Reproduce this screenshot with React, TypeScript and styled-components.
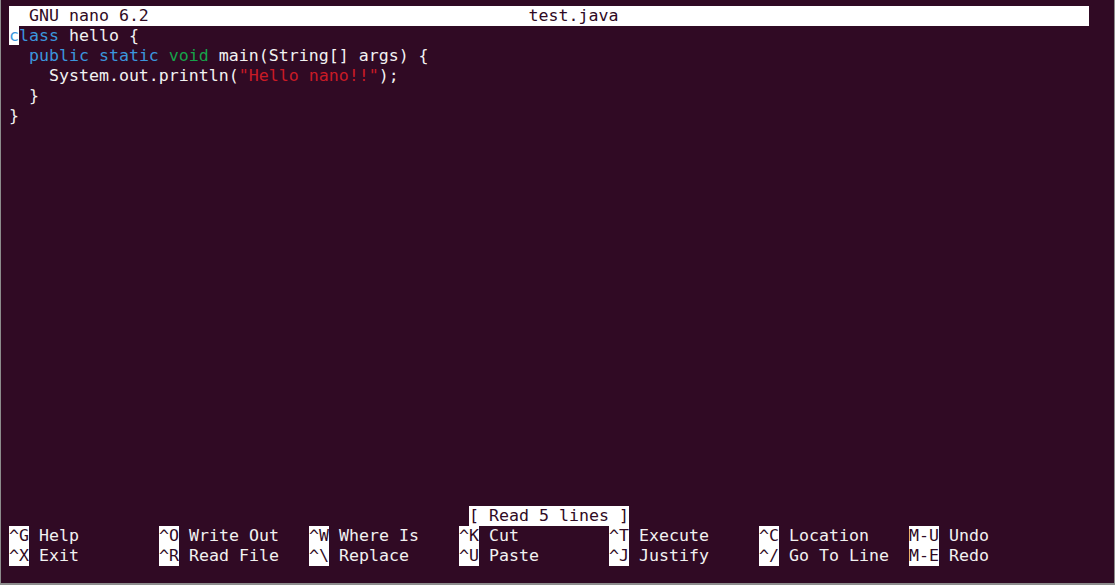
import React from 'react';
import styled, { createGlobalStyle } from 'styled-components';

const BG = '#300a24';
const FG = '#f2f2f2';

const GlobalStyle = createGlobalStyle`
  html, body {
    margin: 0;
    padding: 0;
    background: ${BG};
  }
`;

const Terminal = styled.div`
  box-sizing: border-box;
  width: 1115px;
  height: 585px;
  background: ${BG};
  border-left: 1px solid #8c8c8c;
  border-right: 1px solid #8c8c8c;
  border-bottom: 2px solid #8c8c8c;
  padding: 6px 0 0 8px;
  display: flex;
  flex-direction: column;
  font-family: "DejaVu Sans Mono", "Liberation Mono", monospace;
  font-size: 16.6px;
  line-height: 20px;
  color: ${FG};
  white-space: pre;
  overflow: hidden;
`;

const Row = styled.div`
  height: 20px;
  width: 1080px;
`;

const TitleBar = styled(Row)`
  background: #ffffff;
  color: ${BG};
`;

const Editor = styled.div`
  display: flex;
  flex-direction: column;
  height: 480px;
`;

const Cursor = styled.span`
  background: #ffffff;
`;

const Tok = styled.span<{ $c: string }>`
  color: ${p => p.$c};
`;

const StatusRow = styled(Row)`
  display: flex;
  justify-content: center;
`;

const StatusText = styled.span`
  background: #ffffff;
  color: ${BG};
`;

const Shortcuts = styled.div`
  display: grid;
  grid-template-columns: repeat(7, 150px);
  grid-auto-rows: 20px;
  width: 1080px;
`;

const Shortcut = styled.div`
  display: flex;
`;

const Key = styled.span`
  background: #ffffff;
  color: ${BG};
`;

const BLUE = '#3b96dd';
const GREEN = '#16a34a';
const RED = '#c91b26';

const shortcuts: [string, string][] = [
  ['^G', 'Help'],
  ['^O', 'Write Out'],
  ['^W', 'Where Is'],
  ['^K', 'Cut'],
  ['^T', 'Execute'],
  ['^C', 'Location'],
  ['M-U', 'Undo'],
  ['^X', 'Exit'],
  ['^R', 'Read File'],
  ['^\\', 'Replace'],
  ['^U', 'Paste'],
  ['^J', 'Justify'],
  ['^/', 'Go To Line'],
  ['M-E', 'Redo'],
];

export default function App() {
  return (
    <>
      <GlobalStyle />
      <Terminal>
        <TitleBar>{'  GNU nano 6.2' + ' '.repeat(38) + 'test.java'}</TitleBar>
        <Editor>
          <Row>
            <Cursor><Tok $c={BLUE}>c</Tok></Cursor>
            <Tok $c={BLUE}>lass</Tok>
            {' hello {'}
          </Row>
          <Row>
            {'  '}
            <Tok $c={BLUE}>public static</Tok>
            {' '}
            <Tok $c={GREEN}>void</Tok>
            {' main(String[] args) {'}
          </Row>
          <Row>
            {'    System.out.println('}
            <Tok $c={RED}>"Hello nano!!"</Tok>
            {');'}
          </Row>
          <Row>{'  }'}</Row>
          <Row>{'}'}</Row>
        </Editor>
        <StatusRow>
          <StatusText>[ Read 5 lines ]</StatusText>
        </StatusRow>
        <Shortcuts>
          {shortcuts.map(([k, label]) => (
            <Shortcut key={k}>
              <Key>{k}</Key>
              {' ' + label}
            </Shortcut>
          ))}
        </Shortcuts>
      </Terminal>
    </>
  );
}
